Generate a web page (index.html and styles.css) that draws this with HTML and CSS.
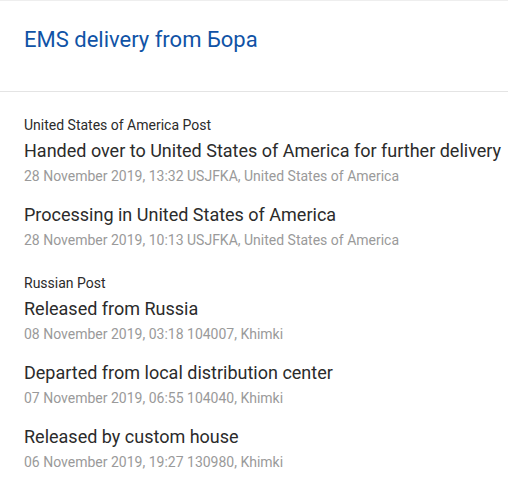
FILE: index.html
```html
<!DOCTYPE html>
<html lang="en">
<head>
<meta charset="utf-8">
<link rel="stylesheet" href="styles.css">
</head>
<body>
<div class="card">
  <div class="card-header">
    <h1 class="card-title">EMS delivery from Бора</h1>
  </div>
  <div class="tracking">
    <section class="group">
      <div class="group-label">United States of America Post</div>
      <div class="event">
        <div class="event-title">Handed over to United States of America for further delivery</div>
        <div class="event-meta">28 November 2019, 13:32 USJFKA, United States of America</div>
      </div>
      <div class="event">
        <div class="event-title">Processing in United States of America</div>
        <div class="event-meta">28 November 2019, 10:13 USJFKA, United States of America</div>
      </div>
    </section>
    <section class="group">
      <div class="group-label">Russian Post</div>
      <div class="event">
        <div class="event-title">Released from Russia</div>
        <div class="event-meta">08 November 2019, 03:18 104007, Khimki</div>
      </div>
      <div class="event">
        <div class="event-title">Departed from local distribution center</div>
        <div class="event-meta">07 November 2019, 06:55 104040, Khimki</div>
      </div>
      <div class="event">
        <div class="event-title">Released by custom house</div>
        <div class="event-meta">06 November 2019, 19:27 130980, Khimki</div>
      </div>
    </section>
  </div>
</div>
</body>
</html>
```
FILE: styles.css
```css
* { box-sizing: border-box; }
html, body {
  margin: 0;
  padding: 0;
  background: #fff;
}
body {
  font-family: Roboto, "Noto Sans", Arial, sans-serif;
  color: #2b2b2b;
}
.card {
  width: 508px;
  border-top: 1px solid #eeeeee;
  background: #fff;
}
.card-header {
  height: 91px;
  padding: 25px 24px 0;
  border-bottom: 1px solid #e4e4e4;
}
.card-title {
  margin: 0;
  font-size: 22px;
  font-weight: 400;
  line-height: 28px;
  color: #1053a6;
}
.tracking {
  padding: 21px 24px 0;
  display: flex;
  flex-direction: column;
  gap: 20px;
}
.group {
  display: flex;
  flex-direction: column;
  gap: 14px;
}
.group-label {
  font-size: 14px;
  line-height: 24px;
  color: #2b2b2b;
  margin-bottom: -14px;
}
.event-title {
  font-size: 18px;
  line-height: 28px;
  color: #2b2b2b;
  white-space: nowrap;
}
.event-meta {
  font-size: 14px;
  line-height: 22px;
  color: #9a9a9a;
}
```
